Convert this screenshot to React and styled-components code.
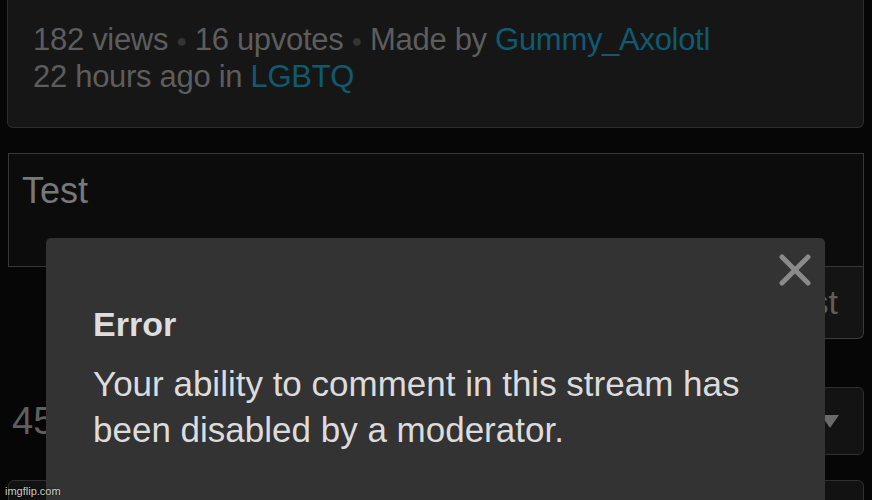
import React from 'react';
import styled, { createGlobalStyle } from 'styled-components';

const Global = createGlobalStyle`
  html, body {
    margin: 0;
    padding: 0;
    background: #060606;
    overflow: hidden;
  }
  body {
    font-family: "Liberation Sans", Arial, Helvetica, sans-serif;
  }
`;

const Page = styled.div`
  width: 872px;
  height: 500px;
  padding: 0 8px;
  box-sizing: border-box;
  position: relative;
  overflow: hidden;
`;

const InfoCard = styled.div`
  height: 128px;
  box-sizing: border-box;
  background: #161616;
  border: 1px solid #2d2d2d;
  border-top: none;
  border-radius: 0 0 6px 6px;
  padding: 22px 0 0 25px;
  margin-left: -1px;
`;

const MetaLine = styled.div`
  font-size: 31px;
  line-height: 36px;
  color: #5d5d5d;
  letter-spacing: -0.3px;
  white-space: nowrap;
`;

const Dot = styled.span`
  color: #343434;
  font-size: 18px;
  vertical-align: 3px;
  margin: 0 8px;
`;

const Link = styled.span`
  color: #0f5a6e;
`;

const CommentBox = styled.div`
  margin-top: 25px;
  height: 114px;
  box-sizing: border-box;
  background: #0c0c0c;
  border: 1px solid #383838;
  padding: 15px 13px;
  font-size: 36px;
  line-height: 44px;
  color: #787878;
`;

const ButtonRow = styled.div`
  display: flex;
  justify-content: flex-end;
`;

const PostButton = styled.div`
  width: 130px;
  height: 72px;
  box-sizing: border-box;
  background: #141414;
  border: 1px solid #3a3a3a;
  border-top: none;
  border-radius: 0 0 6px 6px;
  display: flex;
  align-items: center;
  justify-content: flex-end;
  padding-right: 25px;
  font-size: 34px;
  color: #5e5e5e;
`;

const CounterRow = styled.div`
  margin-top: 48px;
  height: 68px;
  display: flex;
  align-items: center;
  justify-content: space-between;
`;

const Counter = styled.span`
  font-size: 38px;
  color: #5f5f5f;
  margin-left: 4px;
  font-weight: 300;
`;

const SelectBox = styled.div`
  width: 260px;
  height: 68px;
  box-sizing: border-box;
  background: #131313;
  border: 1px solid #2f2f2f;
  border-radius: 6px;
  display: flex;
  align-items: center;
  justify-content: flex-end;
  padding-right: 24px;
`;

const Caret = styled.div`
  width: 0;
  height: 0;
  border-left: 9px solid transparent;
  border-right: 9px solid transparent;
  border-top: 13px solid #6a6a6a;
`;

const BottomBox = styled.div`
  margin-top: 25px;
  height: 60px;
  background: #121212;
  border: 1px solid #2f2f2f;
  border-radius: 6px;
`;

const Modal = styled.div`
  position: absolute;
  left: 46px;
  top: 238px;
  width: 779px;
  height: 300px;
  box-sizing: border-box;
  background: #333333;
  border-radius: 5px;
  padding: 64px 30px 0 47px;
`;

const CloseButton = styled.button`
  position: absolute;
  top: 14px;
  right: 12px;
  width: 36px;
  height: 36px;
  padding: 0;
  border: none;
  background: transparent;
  display: flex;
  align-items: center;
  justify-content: center;
`;

const ModalTitle = styled.div`
  font-size: 34px;
  font-weight: bold;
  color: #dedede;
  line-height: 44px;
`;

const ModalText = styled.div`
  margin-top: 15px;
  font-size: 35px;
  line-height: 46px;
  color: #dcdcdc;
  white-space: nowrap;
`;

const Watermark = styled.div`
  position: absolute;
  left: 5px;
  bottom: 3px;
  font-size: 11px;
  color: rgba(255, 255, 255, 0.8);
  text-shadow: 0 0 2px #000;
`;

export default function App() {
  return (
    <>
      <Global />
      <Page>
        <InfoCard>
          <MetaLine>
            182 views<Dot>●</Dot>16 upvotes<Dot>●</Dot>Made by <Link>Gummy_Axolotl</Link>
          </MetaLine>
          <MetaLine>
            22 hours ago in <Link>LGBTQ</Link>
          </MetaLine>
        </InfoCard>
        <CommentBox>Test</CommentBox>
        <ButtonRow>
          <PostButton>Post</PostButton>
        </ButtonRow>
        <CounterRow>
          <Counter>450</Counter>
          <SelectBox>
            <Caret />
          </SelectBox>
        </CounterRow>
        <BottomBox />
        <Modal>
          <CloseButton aria-label="Close">
            <svg width="32" height="32" viewBox="0 0 32 32">
              <path d="M3 3 L29 29 M29 3 L3 29" stroke="#8a8a8a" strokeWidth="5" strokeLinecap="round" />
            </svg>
          </CloseButton>
          <ModalTitle>Error</ModalTitle>
          <ModalText>
            Your ability to comment in this stream has
            <br />
            been disabled by a moderator.
          </ModalText>
        </Modal>
        <Watermark>imgflip.com</Watermark>
      </Page>
    </>
  );
}
